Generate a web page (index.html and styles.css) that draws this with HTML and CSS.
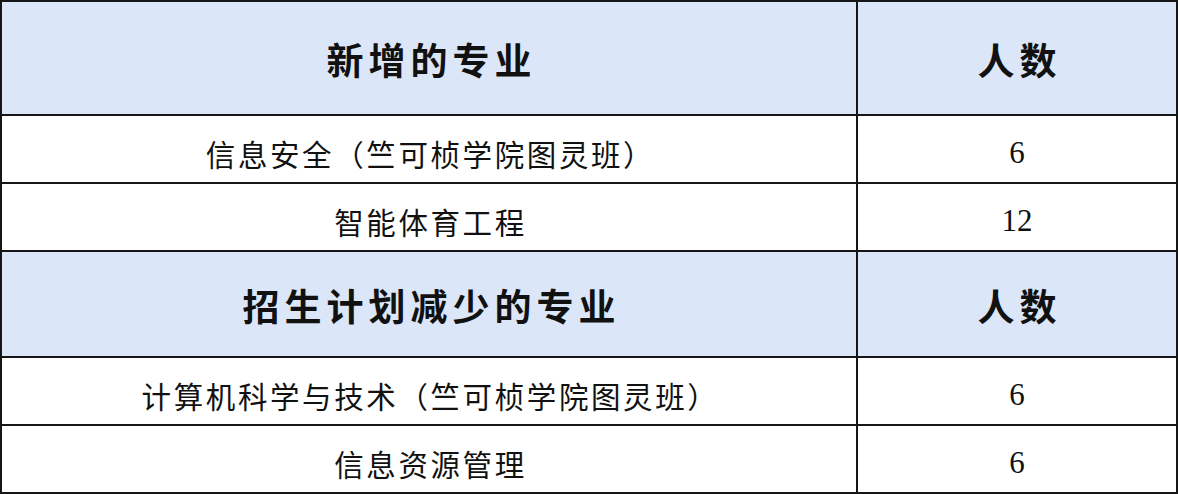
FILE: index.html
```html
<!DOCTYPE html>
<html lang="zh-CN">
<head>
<meta charset="utf-8">
<title>专业调整</title>
<link rel="stylesheet" href="styles.css">
</head>
<body>
<div class="grid">
  <div class="cell head name">新增的专业</div>
  <div class="cell head num-head">人数</div>
  <div class="cell row name-cell">信息安全（竺可桢学院图灵班）</div>
  <div class="cell row num">6</div>
  <div class="cell row name-cell">智能体育工程</div>
  <div class="cell row num">12</div>
  <div class="cell head2 name">招生计划减少的专业</div>
  <div class="cell head2 num-head">人数</div>
  <div class="cell row name-cell">计算机科学与技术（竺可桢学院图灵班）</div>
  <div class="cell row num">6</div>
  <div class="cell row name-cell">信息资源管理</div>
  <div class="cell row num">6</div>
</div>
</body>
</html>
```

FILE: styles.css
```css
html, body {
  margin: 0;
  padding: 0;
  background: #ffffff;
}

.grid {
  width: 1178px;
  height: 494px;
  box-sizing: border-box;
  display: grid;
  grid-template-columns: 854px 318px;
  grid-template-rows: 112px 66px 66px 104px 66px 66px;
  gap: 2px;
  padding: 2px;
  background: #161616;
}

.cell {
  display: flex;
  align-items: center;
  justify-content: center;
  color: #111111;
  font-family: "Noto Sans CJK SC", "Noto Sans", sans-serif;
}

.head, .head2 {
  background: #dbe7f8;
  font-weight: 700;
  font-size: 37px;
  letter-spacing: 5px;
  padding-left: 5px;
  padding-top: 2px;
}

.row {
  background: #ffffff;
}

.name-cell {
  font-size: 29.5px;
  letter-spacing: 2.6px;
  padding-left: 3px;
  padding-top: 8px;
}

.num {
  font-family: "Liberation Serif", "Times New Roman", serif;
  font-size: 31px;
  padding-top: 8px;
}
```
